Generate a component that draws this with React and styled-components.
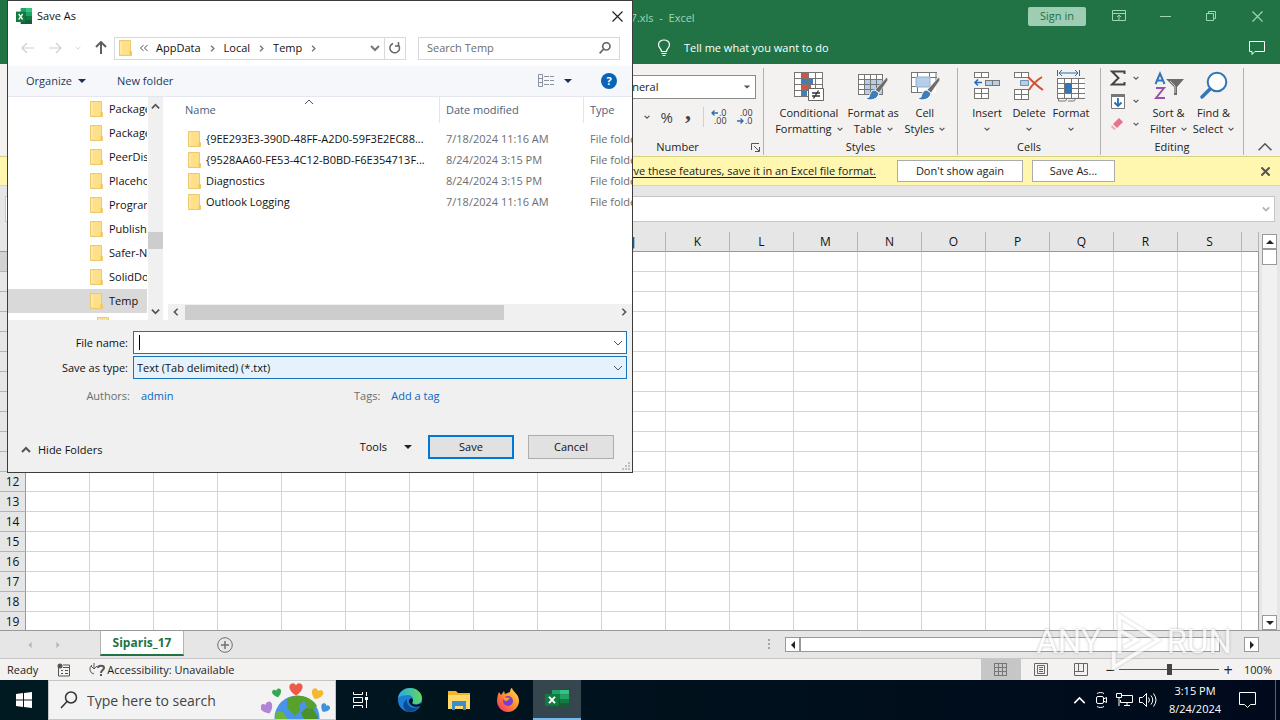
import styled, { createGlobalStyle, css } from "styled-components";

const GlobalStyle = createGlobalStyle`
  * {
    box-sizing: border-box;
  }
  body {
    margin: 0;
    font-family: "Open Sans", "Noto Sans", sans-serif;
    font-size: 11px;
    line-height: 16px;
    color: #222;
  }
  button, input, select {
    font: inherit;
    color: inherit;
    margin: 0;
  }
  button {
    padding: 0;
    border: 0;
    background: none;
  }
  svg {
    display: block;
    flex: none;
  }
`;

const Desktop = styled.div`
  position: relative;
  height: 100vh;
  display: flex;
  flex-direction: column;
  overflow: hidden;
  background: #e6e6e6;
`;

/* ---------- excel window ---------- */

const TitleBar = styled.header`
  display: grid;
  grid-template-columns: 1fr auto 1fr;
  align-items: center;
  height: 32px;
  background: #217346;
  color: #9fd5b7;
`;

const TitleText = styled.div`
  grid-column: 2;
  padding-top: 4px;
  white-space: pre;
`;

const WindowControls = styled.div`
  display: flex;
  justify-content: flex-end;
  align-items: center;
`;

const SignIn = styled.button`
  width: 58px;
  height: 19px;
  margin-right: 10px;
  border-radius: 2px;
  background: #9fcdb3;
  color: #217346;
`;

const WindowButton = styled.button`
  width: 46px;
  height: 30px;
  display: grid;
  place-items: center;
  color: #9fd5b7;
`;

const MenuBar = styled.nav`
  display: flex;
  align-items: center;
  height: 32px;
  padding: 0 14px 0 656px;
  background: #217346;
  color: white;
`;

const TellMe = styled.button`
  display: flex;
  align-items: center;
  gap: 12px;
  margin-right: auto;
`;

const Ribbon = styled.section`
  display: flex;
  justify-content: flex-end;
  height: 92px;
  padding: 4px 0 1px;
  background: #f3f2f1;
`;

const Group = styled.div`
  display: flex;
  flex-direction: column;
  justify-content: space-between;
  width: ${(props) => props.$width}px;
  padding: 0 7px;
  border-right: 1px solid #b1b1b1;
`;

const GroupTools = styled.div`
  display: flex;
  justify-content: center;
  gap: ${(props) => props.$gap || 0}px;
`;

const GroupLabel = styled.div`
  position: relative;
  text-align: center;
`;

const Launcher = styled.button`
  position: absolute;
  right: -4px;
  bottom: 3px;
`;

const BigButton = styled.button`
  display: flex;
  flex-direction: column;
  align-items: center;
  min-width: 42px;
  white-space: nowrap;
  svg.icon {
    margin: 2px 0 3px;
  }
`;

const ButtonLine = styled.span`
  display: flex;
  align-items: center;
  gap: 5px;
  height: 16px;
`;

const SmallTools = styled.div`
  display: flex;
  flex-direction: column;
  gap: 3px;
  margin-right: 6px;
`;

const SmallButton = styled.button`
  display: flex;
  align-items: center;
  gap: 7px;
  height: 20px;
`;

const NumberTools = styled.div`
  display: flex;
  flex-direction: column;
  padding-top: 7px;
`;

const NumberFormat = styled.div`
  display: flex;
  align-items: center;
  height: 24px;
  padding-right: 4px;
  border: 1px solid #8a8a8a;
  background: white;
  select {
    flex: 1;
    padding-left: 18px;
    border: 0;
    background: none;
    appearance: none;
  }
`;

const NumberRow = styled.div`
  display: flex;
  justify-content: flex-end;
  align-items: center;
  gap: 7px;
  height: 36px;
  padding-right: 2px;
  color: #444;
  .percent {
    margin-left: 4px;
    font-size: 15px;
  }
  .comma {
    width: 16px;
    padding-bottom: 12px;
    font: bold 24px/8px "Liberation Serif", serif;
  }
`;

const Rule = styled.span`
  width: 1px;
  height: 20px;
  background: #d0d0d0;
`;

const CollapseArea = styled.div`
  display: flex;
  align-items: flex-end;
  justify-content: center;
  width: 36px;
  padding: 0 0 0 5px;
`;

const MessageBar = styled.div`
  display: flex;
  align-items: center;
  height: 30px;
  padding-right: 10px;
  border-top: 1px solid #d6d083;
  border-bottom: 1px solid #d8d8a8;
  background: #fff6b0;
`;

const MessageText = styled.div`
  width: 876px;
  margin-right: 21px;
  text-align: right;
  text-decoration: underline;
  text-underline-offset: 2px;
`;

const MessageButton = styled.button`
  width: ${(props) => props.$width}px;
  height: 22px;
  margin-right: 9px;
  border: 1px solid #ababab;
  background: white;
`;

const MessageClose = styled.button`
  margin-left: auto;
`;

const FormulaRow = styled.div`
  display: flex;
  gap: 8px;
  height: 46px;
  padding: 10px 5px;
  background: #e6e6e6;
`;

const NameBox = styled.input`
  width: 100px;
  border: 1px solid #c6c6c6;
  background: white;
`;

const FormulaBox = styled.div`
  flex: 1;
  display: flex;
  align-items: center;
  padding-right: 4px;
  border: 1px solid #c6c6c6;
  background: white;
  input {
    flex: 1;
    border: 0;
    outline: 0;
  }
`;

const SheetArea = styled.main`
  flex: 1;
  min-height: 0;
  display: flex;
`;

const SheetClip = styled.div`
  position: relative;
  flex: 1;
  overflow: hidden;
  &::after {
    content: "";
    position: absolute;
    top: 19px;
    right: 0;
    bottom: 0;
    width: 1px;
    background: #999;
  }
`;

const Sheet = styled.table`
  width: 100%;
  table-layout: fixed;
  border-collapse: separate;
  border-spacing: 0;
  font-size: 12px;
  color: #111;
  col.head {
    width: 26px;
  }
  col.cell {
    width: 64px;
  }
  th,
  td {
    height: 20px;
    padding: 0;
    font-weight: normal;
    line-height: 16px;
    border-right: 1px solid #d4d4d4;
    border-bottom: 1px solid #d4d4d4;
  }
  td {
    background: white;
  }
  th {
    background: #e6e6e6;
    border-color: #b4b4b4;
  }
  thead th {
    border-bottom-color: #999;
  }
  tbody th {
    border-right-color: #999;
  }
  tbody tr:first-child th {
    background: #d2d2d2;
  }
`;

const SideScroll = styled.div`
  display: flex;
  flex-direction: column;
  width: 15px;
  margin: 2px 3px 0;
  background: #f1f1f1;
`;

const ScrollButton = styled.button`
  width: 15px;
  height: 15px;
  display: grid;
  place-items: center;
  border: 1px solid #999;
  background: white;
`;

const SideThumb = styled.div`
  height: 16px;
  margin-bottom: auto;
  border: 1px solid #999;
  background: white;
`;

const SheetTabs = styled.div`
  display: flex;
  align-items: center;
  height: 29px;
  padding-right: 21px;
  border-top: 1px solid #999;
  border-bottom: 1px solid #c6c6c6;
  background: #e6e6e6;
`;

const TabArrows = styled.div`
  display: flex;
  justify-content: center;
  gap: 20px;
  width: 100px;
  padding-right: 13px;
`;

const SheetTab = styled.button`
  align-self: flex-start;
  width: 84px;
  height: 25px;
  border: 1px solid #b4b4b4;
  border-width: 0 1px;
  border-bottom: 2px solid #217346;
  background: white;
  font-size: 12px;
  font-weight: 700;
  color: #217346;
`;

const AddSheet = styled.button`
  margin: 0 auto 0 33px;
`;

const BottomScroll = styled.div`
  display: flex;
  width: 474px;
  margin-left: 14px;
`;

const BottomThumb = styled.div`
  flex: 1;
  margin-right: 24px;
  border: 1px solid #999;
  background: white;
`;

const StatusBar = styled.footer`
  display: flex;
  align-items: center;
  height: 21px;
  padding: 0 8px 0 7px;
  background: #f3f2f1;
`;

const StatusIcon = styled.span`
  margin: 0 ${(props) => props.$right}px 0 ${(props) => props.$left}px;
`;

const StatusText = styled.span`
  margin-right: auto;
`;

const ViewButton = styled.button`
  width: 40px;
  height: 21px;
  display: grid;
  place-items: center;
  background: ${(props) => (props.$active ? "#c6c6c6" : "none")};
`;

const ZoomTools = styled.div`
  display: flex;
  align-items: center;
  margin-left: 4px;
`;

const ZoomStep = styled.button`
  width: 10px;
  font-size: 16px;
  line-height: 16px;
`;

const ZoomSlider = styled.input`
  appearance: none;
  width: 100px;
  height: 12px;
  margin: 0 4px;
  background: linear-gradient(#555, #555) center / 100% 1px no-repeat;
  &::-webkit-slider-thumb {
    appearance: none;
    width: 5px;
    height: 11px;
    background: #444;
  }
`;

const ZoomValue = styled.span`
  width: 39px;
  text-align: right;
`;

/* ---------- taskbar ---------- */

const Taskbar = styled.footer`
  display: flex;
  height: 40px;
  background: linear-gradient(90deg, #001a22, #00101c 60%, #000a1c);
  color: white;
`;

const TaskButton = styled.button`
  width: ${(props) => props.$width || 49}px;
  display: grid;
  place-items: center;
  ${(props) =>
    props.$active &&
    css`
      background: #35464e;
      border-bottom: 2px solid #76b9ed;
    `}
`;

const SearchBox = styled.label`
  display: flex;
  align-items: center;
  width: 288px;
  padding-left: 11px;
  border: 1px solid #c6c6c6;
  background: #f3f3f3;
  color: #333;
  input {
    flex: 1;
    min-width: 0;
    margin-left: 9px;
    padding: 2px 0 0;
    border: 0;
    outline: 0;
    background: none;
    font-size: 14px;
  }
  input::placeholder {
    color: #444;
  }
  .globe {
    align-self: flex-end;
    margin-right: 4px;
  }
`;

const Tray = styled.div`
  display: flex;
  align-items: center;
  margin-left: auto;
  padding-right: 14px;
  gap: 6px;
`;

const Clock = styled.div`
  width: 64px;
  text-align: center;
  line-height: 18px;
`;

const ShowDesktop = styled.button`
  width: 5px;
  border-left: 1px solid #56626c;
`;

/* ---------- save dialog ---------- */

const Dialog = styled.section`
  position: absolute;
  top: 0;
  left: 7px;
  width: 626px;
  border: 1px solid #3c3c3c;
  background: #f0f0f0;
  color: #111;
`;

const DialogTitle = styled.div`
  display: flex;
  align-items: center;
  gap: 5px;
  height: 30px;
  padding: 0 9px 0 8px;
  background: white;
  button {
    margin-left: auto;
  }
`;

const NavRow = styled.div`
  display: flex;
  align-items: center;
  height: 35px;
  padding: 0 12px 1px 13px;
  background: white;
`;

const NavButtons = styled.div`
  display: flex;
  align-items: center;
  justify-content: space-between;
  width: 87px;
  margin-right: 6px;
`;

const AddressBar = styled.div`
  display: flex;
  align-items: center;
  gap: 8px;
  width: 292px;
  height: 23px;
  padding-left: 4px;
  border: 1px solid #d9d9d9;
  .drop {
    margin-left: auto;
    margin-right: -4px;
  }
`;

const Refresh = styled.button`
  width: 21px;
  height: 21px;
  display: grid;
  place-items: center;
  border-left: 1px solid #d9d9d9;
`;

const DialogSearch = styled.label`
  display: flex;
  align-items: center;
  flex: 1;
  height: 23px;
  margin-left: 12px;
  padding: 0 8px;
  border: 1px solid #d9d9d9;
  input {
    flex: 1;
    min-width: 0;
    padding: 0;
    border: 0;
    outline: 0;
  }
  input::placeholder {
    color: #6d6d6d;
  }
`;

const Toolbar = styled.div`
  display: flex;
  align-items: center;
  height: 31px;
  padding: 0 15px 0 18px;
  border-bottom: 1px solid #e4e8ee;
  background: #f5f7fa;
  color: #1e395b;
`;

const ToolbarButton = styled.button`
  display: flex;
  align-items: center;
  gap: 5px;
  margin-right: 30px;
`;

const ViewTools = styled.div`
  display: flex;
  align-items: center;
  gap: 8px;
  margin-left: auto;
`;

const HelpButton = styled.button`
  width: 16px;
  height: 16px;
  margin-left: 20px;
  border-radius: 50%;
  background: #0a63b8;
  color: white;
  font-weight: 700;
  line-height: 16px;
`;

const Browser = styled.div`
  display: flex;
  height: 223px;
  background: white;
`;

const Tree = styled.ul`
  width: 139px;
  margin: 0;
  padding: 0;
  list-style: none;
  overflow: hidden;
`;

const TreeItem = styled.li`
  display: flex;
  align-items: center;
  gap: 6px;
  height: 24px;
  padding-left: ${(props) => (props.$deep ? 89 : 82)}px;
  background: ${(props) => (props.$selected ? "#d9d9d9" : "none")};
  white-space: nowrap;
`;

const TreeScroll = styled.div`
  display: flex;
  flex-direction: column;
  align-items: center;
  justify-content: space-between;
  width: 15px;
  margin-left: 1px;
  padding: 5px 0 4px;
  background: #f0f0f0;
  span {
    width: 15px;
    height: 17px;
    margin-top: 62px;
    background: #cdcdcd;
  }
`;

const FilePane = styled.div`
  flex: 1;
  min-width: 0;
  display: flex;
  flex-direction: column;
  justify-content: space-between;
  margin-left: 5px;
  overflow: hidden;
`;

const Files = styled.table`
  width: 100%;
  table-layout: fixed;
  border-spacing: 0;
  white-space: nowrap;
  col.name {
    width: 272px;
  }
  col.date {
    width: 144px;
  }
  th,
  td {
    padding: 0 0 0 6px;
    text-align: left;
    font-weight: normal;
    overflow: hidden;
  }
  th {
    position: relative;
    height: 26px;
    border-right: 1px solid #e5e5e5;
    color: #4c607a;
  }
  th:first-child {
    padding-left: 17px;
  }
  th:last-child {
    border-right: 0;
  }
  td {
    height: 21px;
    color: #6d6d6d;
  }
  td:first-child {
    padding-left: 20px;
    color: #111;
  }
  tbody::before {
    content: "";
    display: block;
    height: 5px;
  }
`;

const SortMark = styled.span`
  position: absolute;
  top: 0;
  left: 136px;
`;

const FileCell = styled.div`
  display: flex;
  align-items: center;
  gap: 5px;
`;

const FileScroll = styled.div`
  display: flex;
  align-items: center;
  justify-content: space-between;
  height: 16px;
  padding: 0 4px;
  background: #f0f0f0;
  span {
    width: 319px;
    height: 15px;
    margin: 0 auto 0 5px;
    background: #cdcdcd;
  }
`;

const Form = styled.div`
  display: grid;
  grid-template-columns: 120px 1fr;
  gap: 2px 5px;
  padding: 11px 5px 9px 0;
  label {
    align-self: center;
    text-align: right;
  }
`;

const Combo = styled.div`
  display: flex;
  align-items: center;
  height: 23px;
  padding-right: 3px;
  border: 1px solid #1a72b8;
  background: ${(props) => (props.$tint ? "#e5f1fb" : "white")};
  input,
  select {
    flex: 1;
    padding: 0 3px;
    border: 0;
    outline: 0;
    appearance: none;
    background: none;
  }
`;

const Caret = styled.span`
  width: 1px;
  height: 15px;
  margin-left: 5px;
  background: black;
`;

const MetaRow = styled.div`
  display: grid;
  grid-template-columns: 122px 202px auto 1fr;
  column-gap: 11px;
  color: #6d6d6d;
  span:first-child {
    text-align: right;
  }
  a {
    color: #0b66c3;
    text-decoration: none;
  }
`;

const Actions = styled.div`
  display: flex;
  align-items: center;
  padding: 31px 18px 13px 13px;
`;

const HideFolders = styled.button`
  display: flex;
  align-items: center;
  gap: 7px;
  margin-right: auto;
  padding-top: 6px;
`;

const Tools = styled.button`
  display: flex;
  align-items: center;
  gap: 16px;
  margin-right: 15px;
`;

const DialogButton = styled.button`
  width: 86px;
  height: 24px;
  margin-left: ${(props) => (props.$primary ? 0 : 14)}px;
  border: ${(props) => (props.$primary ? "2px solid #0078d7" : "1px solid #adadad")};
  background: #e1e1e1;
`;

const Grip = styled.div`
  position: absolute;
  right: 2px;
  bottom: 1px;
`;

/* ---------- watermark ---------- */

const Watermark = styled.div`
  position: absolute;
  right: 48px;
  bottom: 46px;
  display: flex;
  align-items: center;
  gap: 5px;
  opacity: 0.7;
  color: white;
  font: 400 33px/36px Roboto, sans-serif;
  text-shadow: 0 0 3px #999;
  pointer-events: none;
  svg {
    filter: drop-shadow(0 0 1px #aaa);
  }
`;

/* ---------- icons ---------- */

const chevrons = {
  down: "M1 3l4 4 4-4",
  up: "M1 7l4-4 4 4",
  left: "M7 1L3 5l4 4",
  right: "M3 1l4 4-4 4",
};

function Chevron({ dir = "down", size = 10, width = 1.5, color = "#555" }) {
  return (
    <svg width={size} height={size} viewBox="0 0 10 10">
      <path d={chevrons[dir]} fill="none" stroke={color} strokeWidth={width} />
    </svg>
  );
}

const triangles = {
  down: "M1 3h8l-4 4z",
  up: "M1 7h8L5 3z",
  left: "M7 1v8L3 5z",
  right: "M3 1v8l4-4z",
};

function Triangle({ dir = "down", size = 10, color = "#222" }) {
  return (
    <svg width={size} height={size} viewBox="0 0 10 10">
      <path d={triangles[dir]} fill={color} />
    </svg>
  );
}

function Cross({ size = 11, width = 1.2, color = "#222" }) {
  return (
    <svg width={size} height={size} viewBox="0 0 11 11">
      <path d="M0.5 0.5l10 10M10.5 0.5l-10 10" stroke={color} strokeWidth={width} />
    </svg>
  );
}

function Folder() {
  return (
    <svg width="13" height="16" viewBox="0 0 13 16">
      <path d="M0.500 0.500h11v10l1 1v4h-12z" fill="#ffe08a" stroke="#edc96b" />
      <path d="M10.500 15v-4l1.500-1v5z" fill="#f3c65a" />
      <path d="M2 2v12" stroke="#fff0bd" />
    </svg>
  );
}

function ExcelLogo({ width = 16, height = 16 }) {
  return (
    <svg width={width} height={height} viewBox="0 0 24 20" preserveAspectRatio="none">
      <path d="M7 0h8v5H7z" fill="#21a366" />
      <path d="M15 0h9v5h-9z" fill="#33c481" />
      <path d="M7 5h8v5H7z" fill="#107c41" />
      <path d="M15 5h9v5h-9z" fill="#21a366" />
      <path d="M7 10h8v10H7z" fill="#185c37" />
      <path d="M15 10h9v5h-9z" fill="#107c41" />
      <path d="M15 15h9v5h-9z" fill="#185c37" />
      <path d="M0 4.500h14v13H0z" fill="#107c41" />
      <path d="M4 7.500l6 7M10 7.500l-6 7" stroke="white" strokeWidth="2" />
    </svg>
  );
}

function GridLines({ x = 0, y = 0, cols, rows, w, h }) {
  const d = [];
  for (let c = 0; c <= cols; c++) d.push(`M${x + c * w + 0.5} ${y}v${rows * h + 1}`);
  for (let r = 0; r <= rows; r++) d.push(`M${x} ${y + r * h + 0.5}h${cols * w + 1}`);
  return <path d={d.join("")} fill="none" stroke="#767676" />;
}

function ConditionalIcon() {
  return (
    <svg className="icon" width="30" height="32" viewBox="0 0 30 32">
      <path d="M0 2h28v24H0z" fill="white" />
      <path d="M8 2h6v6H8zM8 14h9v6H8z" fill="#d35345" />
      <path d="M8 8h11v6H8zM8 20h5v6H8z" fill="#3f7fb9" />
      <GridLines y={2} cols={4} rows={4} w={7} h={6} />
      <path d="M14.500 18.500h15v12h-15z" fill="white" stroke="#666" />
      <path d="M18 23h8M18 26h8M24.500 20.500l-5 8" stroke="#333" strokeWidth="1.3" />
    </svg>
  );
}

function Brush() {
  return (
    <>
      <path d="M29 7L17 20l4 3 9-13z" fill="#6d6d6d" stroke="#f3f2f1" strokeWidth="0.700" />
      <path d="M17 20c-4 0-5 4-6 7l-4 2c5 2 13 1 14-6z" fill="#3f7fb9" stroke="white" />
    </>
  );
}

function TableIcon() {
  return (
    <svg className="icon" width="30" height="32" viewBox="0 0 30 32">
      <path d="M0 4h25v20H0z" fill="white" />
      <path d="M7 9h18v15H7z" fill="#b7cfe6" />
      <GridLines y={4} cols={4} rows={4} w={6} h={5} />
      <Brush />
    </svg>
  );
}

function CellIcon() {
  return (
    <svg className="icon" width="30" height="32" viewBox="0 0 30 32">
      <path d="M1 2h25v21H1z" fill="white" />
      <path d="M1.500 2v21M7.500 2v21M19.500 2v5M26 2v10M1 2.500h26M1 7.500h26M1 16.500h7M1 22.500h14" stroke="#767676" fill="none" />
      <path d="M6 7h14v10H6z" fill="#b7cfe6" stroke="#8fb0d0" />
      <Brush />
    </svg>
  );
}

function InsertIcon() {
  return (
    <svg className="icon" width="28" height="32" viewBox="0 0 28 32">
      <path d="M1 2h14v5H1zM1 18h14v11H1z" fill="white" />
      <GridLines x={1} y={2} cols={2} rows={1} w={7} h={5} />
      <GridLines x={1} y={18} cols={2} rows={2} w={7} h={5} />
      <path d="M12 10h14v5H12z" fill="#b7cfe6" />
      <GridLines x={12} y={10} cols={2} rows={1} w={7} h={5} />
      <path d="M9 12.500H2M5 9.500l-3 3 3 3" fill="none" stroke="#2b6cb0" strokeWidth="1.6" />
    </svg>
  );
}

function DeleteIcon() {
  return (
    <svg className="icon" width="30" height="32" viewBox="0 0 30 32">
      <path d="M0 2h14v5H0zM0 19h14v10H0z" fill="white" />
      <GridLines y={2} cols={2} rows={1} w={7} h={5} />
      <GridLines y={19} cols={2} rows={2} w={7} h={5} />
      <path d="M6.500 10.500h8v5h-8z" fill="#b7cfe6" stroke="#6f8fae" />
      <path d="M14 7c4 4 9 9 15 13M28 7c-5 3-10 8-13 13" stroke="#d4502f" strokeWidth="2" fill="none" />
    </svg>
  );
}

function FormatIcon() {
  return (
    <svg className="icon" width="28" height="32" viewBox="0 0 28 32">
      <path d="M0.500 0v6M22.500 0v6M2 3h19M5 0L2 3l3 3M18 0l3 3-3 3" fill="none" stroke="#2b6cb0" />
      <path d="M0 8h27v19H0z" fill="white" />
      <GridLines y={8} cols={4} rows={4} w={7} h={5} />
      <path d="M8 13h7v10H8z" fill="#3474b7" />
      <path d="M1.500 28v3h7l2-3M11 31h6l2-3" fill="none" stroke="#767676" />
    </svg>
  );
}

function SortIcon() {
  return (
    <svg className="icon" width="30" height="32" viewBox="0 0 30 32">
      <path d="M1.500 14L6 3.500 10.500 14M3 10.500h6" fill="none" stroke="#2f78b8" strokeWidth="2" />
      <path d="M2 18h8L2 28h9" fill="none" stroke="#9b4fae" strokeWidth="2" />
      <path d="M12 9h18l-7 8v8h-3v-8z" fill="#6b6b6b" />
      <path d="M16 11l5 5v7" fill="none" stroke="#d0d0d0" />
    </svg>
  );
}

function FindIcon() {
  return (
    <svg className="icon" width="30" height="32" viewBox="0 0 30 32">
      <circle cx="18" cy="12" r="9.300" fill="white" stroke="#3474b7" strokeWidth="2" />
      <path d="M11 19l-8 8" stroke="#3474b7" strokeWidth="3.500" strokeLinecap="round" />
    </svg>
  );
}

function DecimalIcon({ more }) {
  return (
    <svg width="18" height="18" viewBox="0 0 18 18" fontFamily="Open Sans" fontSize="9" fill="#333">
      <text x={more ? 8 : 4} y="8">{more ? ".0" : ".00"}</text>
      <text x={more ? 3 : 9} y="16">{more ? ".00" : ".0"}</text>
      {more ? (
        <path d="M7 5H1M3.500 2.500L1 5l2.500 2.500" fill="none" stroke="#2b6cb0" strokeWidth="1.300" />
      ) : (
        <path d="M1 13h6M4.500 10.500L7 13l-2.500 2.500" fill="none" stroke="#2b6cb0" strokeWidth="1.300" />
      )}
    </svg>
  );
}

function Magnifier({ size, color = "#333", width = 1.5 }) {
  return (
    <svg width={size} height={size} viewBox="0 0 18 18">
      <circle cx="11" cy="6.500" r="5.500" fill="none" stroke={color} strokeWidth={width} />
      <path d="M7 10.500L1 17" stroke={color} strokeWidth={width} />
    </svg>
  );
}

function Arrow({ dir, color }) {
  const d = {
    left: "M13 7H1M6 2L1 7l5 5",
    right: "M1 7h12M8 2l5 5-5 5",
    up: "M7 13V1M2 6l5-5 5 5",
  };
  return (
    <svg width="14" height="14" viewBox="0 0 14 14">
      <path d={d[dir]} fill="none" stroke={color} strokeWidth={dir === "up" ? 2 : 1.2} />
    </svg>
  );
}

const HEART = "M0 4C-5 1-5-3-2.500-3.500-1-4 0-2.500 0-2 0-2.500 1-4 2.500-3.500 5-3 5 1 0 4z";

function Globe() {
  return (
    <svg className="globe" width="70" height="38" viewBox="0 0 70 38">
      <circle cx="36" cy="37" r="22.500" fill="#4a94e8" />
      <path d="M26 18c6-4 13-4 19-2 5 2 9 5 11 9l-4 4-6-3-3-6-5 4 1 6-5 5-4-4-4-5z" fill="#5aa02c" />
      <path d="M45 27l7 1 5 8v2H43l-3-6z" fill="#4c9128" />
      <path d="M16 30l6 1 4 6v1H14z" fill="#6fb43a" />
      <path d={HEART} transform="translate(35 8) scale(1.6)" fill="#ee5a4a" />
      <path d={HEART} transform="translate(16 12) rotate(-15) scale(1.100)" fill="#34a853" />
      <path d={HEART} transform="translate(56 13) rotate(20) scale(1.400)" fill="#f5b92e" />
      <path d={HEART} transform="translate(6 27) rotate(-25) scale(1.500)" fill="#b184d8" />
      <path d={HEART} transform="translate(64 27) rotate(30) scale(1.100)" fill="#3d92dc" />
    </svg>
  );
}

function Edge() {
  return (
    <svg width="26" height="26" viewBox="0 0 26 26">
      <defs>
        <linearGradient id="edgeTop" x1="0" x2="1">
          <stop offset="0" stopColor="#2aa8e8" />
          <stop offset="1" stopColor="#62d85c" />
        </linearGradient>
      </defs>
      <circle cx="13" cy="13" r="12" fill="#1a7fd4" />
      <path d="M1 11C2 4 8 1 13 1c7 0 12 5 12 10 0 4-3 6-6 6-3 0-4-1-4-2 2-2 1-7-4-7-4 0-8 1-10 3z" fill="url(#edgeTop)" />
      <path d="M10 12c-1 6 4 11 12 8-3 4-8 5-11 5-5-2-7-9-1-13z" fill="#0c4a94" />
      <path d="M14 11c3 1 2 4 1 5 1 2 5 2 7 1l3-1-1 3c-5 2-12 0-12-5 0-1 1-2 2-3z" fill="#00141e" />
    </svg>
  );
}

function Explorer() {
  return (
    <svg width="24" height="22" viewBox="0 0 24 22">
      <path d="M1 2h8l2 2h12v15H1z" fill="#f0b429" />
      <path d="M1 6h22v14H1z" fill="#ffd869" />
      <path d="M5 12h14v9h-3v-4H8v4H5z" fill="#3c8ec9" />
    </svg>
  );
}

function Firefox() {
  return (
    <svg width="24" height="26" viewBox="0 0 24 26">
      <defs>
        <linearGradient id="fox" x1="1" y1="0" x2="0" y2="1">
          <stop offset="0" stopColor="#ffe14a" />
          <stop offset="0.500" stopColor="#ff8a2a" />
          <stop offset="1" stopColor="#f5267a" />
        </linearGradient>
      </defs>
      <path d="M3 5l2 3 3-4 1 3 5-2c0-2 1-4 2-4 1 4 7 6 7 13 0 6-5 11-11 11S1 20 1 14c0-4 1-7 2-9z" fill="url(#fox)" />
      <circle cx="12" cy="14" r="5" fill="#7a3fd0" />
      <path d="M7 10c3 0 4 1 7 1l-3 3c-3 0-4-2-4-4z" fill="#ff9a2c" />
    </svg>
  );
}

/* ---------- data ---------- */

const columns = "ABCDEFGHIJKLMNOPQRS".split("");
const rows = Array.from({ length: 19 }, (_, i) => i + 1);

const folders = [
  "Packages",
  "Package Cache",
  "PeerDistRepub",
  "PlaceholderTile",
  "Programs",
  "Publishers",
  "Safer-Networking",
  "SolidDocuments",
  "Temp",
];

const files = [
  { name: "{9EE293E3-390D-48FF-A2D0-59F3E2EC88...", date: "7/18/2024 11:16 AM" },
  { name: "{9528AA60-FE53-4C12-B0BD-F6E354713F...", date: "8/24/2024 3:15 PM" },
  { name: "Diagnostics", date: "8/24/2024 3:15 PM" },
  { name: "Outlook Logging", date: "7/18/2024 11:16 AM" },
];

/* ---------- parts ---------- */

function RibbonButton({ icon, top, bottom }) {
  return (
    <BigButton>
      {icon}
      <ButtonLine>{top}</ButtonLine>
      <ButtonLine>
        {bottom}
        <Chevron size={6} width={2} />
      </ButtonLine>
    </BigButton>
  );
}

function ExcelRibbon() {
  return (
    <Ribbon>
      <Group $width={172}>
        <NumberTools>
          <NumberFormat>
            <select aria-label="Number format">
              <option>General</option>
            </select>
            <Triangle size={8} color="#555" />
          </NumberFormat>
          <NumberRow>
            <Chevron size={6} width={2} />
            <button className="percent">%</button>
            <button className="comma">,</button>
            <Rule />
            <button aria-label="Increase decimal"><DecimalIcon more /></button>
            <button aria-label="Decrease decimal"><DecimalIcon /></button>
          </NumberRow>
        </NumberTools>
        <GroupLabel>
          Number
          <Launcher aria-label="Number settings">
            <svg width="9" height="9" viewBox="0 0 9 9">
              <path d="M0.500 7V0.500H8M3 3l5 5M8.500 4v4.500H4" fill="none" stroke="#555" />
            </svg>
          </Launcher>
        </GroupLabel>
      </Group>
      <Group $width={194}>
        <GroupTools $gap={5}>
          <RibbonButton icon={<ConditionalIcon />} top="Conditional" bottom="Formatting" />
          <RibbonButton icon={<TableIcon />} top="Format as" bottom="Table" />
          <RibbonButton icon={<CellIcon />} top="Cell" bottom="Styles" />
        </GroupTools>
        <GroupLabel>Styles</GroupLabel>
      </Group>
      <Group $width={143}>
        <GroupTools>
          <RibbonButton icon={<InsertIcon />} top="Insert" />
          <RibbonButton icon={<DeleteIcon />} top="Delete" />
          <RibbonButton icon={<FormatIcon />} top="Format" />
        </GroupTools>
        <GroupLabel>Cells</GroupLabel>
      </Group>
      <Group $width={143}>
        <GroupTools $gap={3}>
          <SmallTools>
            <SmallButton aria-label="AutoSum">
              <svg width="16" height="16" viewBox="0 0 16 16">
                <path d="M14.500 4V1.500H2L8.500 8 2 14.500h12.500V12" fill="none" stroke="#444" strokeWidth="2" />
              </svg>
              <Chevron size={6} width={2} />
            </SmallButton>
            <SmallButton aria-label="Fill">
              <svg width="16" height="16" viewBox="0 0 16 16">
                <path d="M1.500 1.500h13v14h-13z" fill="white" stroke="#777" />
                <path d="M1 1h14v3H1z" fill="#777" />
                <path d="M8 5v8M4.500 9.500L8 13l3.500-3.500" fill="none" stroke="#2b6cb0" strokeWidth="1.800" />
              </svg>
              <Chevron size={6} width={2} />
            </SmallButton>
            <SmallButton aria-label="Clear">
              <svg width="16" height="16" viewBox="0 0 16 16">
                <path d="M9 2l4 4-6 6-4-4z" fill="#e8728c" />
                <path d="M2 9l4 4-2 1-3-3z" fill="#f2a9b8" />
              </svg>
              <Chevron size={6} width={2} />
            </SmallButton>
          </SmallTools>
          <RibbonButton icon={<SortIcon />} top="Sort &" bottom="Filter" />
          <RibbonButton icon={<FindIcon />} top="Find &" bottom="Select" />
        </GroupTools>
        <GroupLabel>Editing</GroupLabel>
      </Group>
      <CollapseArea>
        <button aria-label="Collapse ribbon"><Chevron dir="up" size={16} width={1} /></button>
      </CollapseArea>
    </Ribbon>
  );
}

function Spreadsheet() {
  return (
    <SheetArea>
      <SheetClip>
        <Sheet>
          <colgroup>
            <col className="head" />
            {columns.map((c) => (
              <col className="cell" key={c} />
            ))}
            <col />
          </colgroup>
          <thead>
            <tr>
              <th />
              {columns.map((c) => (
                <th key={c}>{c}</th>
              ))}
              <th />
            </tr>
          </thead>
          <tbody>
            {rows.map((r) => (
              <tr key={r}>
                <th>{r}</th>
                {columns.map((c) => (
                  <td key={c} />
                ))}
                <td />
              </tr>
            ))}
          </tbody>
        </Sheet>
      </SheetClip>
      <SideScroll>
        <ScrollButton aria-label="Scroll up"><Triangle dir="up" /></ScrollButton>
        <SideThumb />
        <ScrollButton aria-label="Scroll down"><Triangle /></ScrollButton>
      </SideScroll>
    </SheetArea>
  );
}

function SaveDialog() {
  return (
    <Dialog role="dialog" aria-label="Save As">
      <DialogTitle>
        <ExcelLogo />
        Save As
        <button aria-label="Close"><Cross /></button>
      </DialogTitle>
      <NavRow>
        <NavButtons>
          <Arrow dir="left" color="#d0d0d0" />
          <Arrow dir="right" color="#d0d0d0" />
          <Chevron size={6} color="#d0d0d0" />
          <Arrow dir="up" color="#5f5f5f" />
        </NavButtons>
        <AddressBar>
          <Folder />
          <svg width="8" height="8" viewBox="0 0 8 8">
            <path d="M3.500 1l-3 3 3 3M7.500 1l-3 3 3 3" fill="none" stroke="#555" />
          </svg>
          <button>AppData</button>
          <Chevron dir="right" size={7} width={2} color="#777" />
          <button>Local</button>
          <Chevron dir="right" size={7} width={2} color="#777" />
          <button>Temp</button>
          <Chevron dir="right" size={7} width={2} color="#777" />
          <button className="drop" aria-label="Previous locations"><Chevron width={2} color="#777" /></button>
          <Refresh aria-label="Refresh">
            <svg width="12" height="12" viewBox="0 0 12 12">
              <path d="M4 1.500A4.800 4.800 0 1 0 9 2.500M9.500 0v4H6" fill="none" stroke="#666" strokeWidth="1.500" />
            </svg>
          </Refresh>
        </AddressBar>
        <DialogSearch>
          <input placeholder="Search Temp" aria-label="Search Temp" />
          <Magnifier size={12} color="#666" width={2.5} />
        </DialogSearch>
      </NavRow>
      <Toolbar>
        <ToolbarButton>
          Organize
          <Triangle color="#1e2f4b" />
        </ToolbarButton>
        <ToolbarButton>New folder</ToolbarButton>
        <ViewTools>
          <svg width="17" height="14" viewBox="0 0 17 14">
            <path d="M0.500 0.500h4v12h-4zM0 4.500h5M0 8.500h5" fill="none" stroke="#8b939e" />
            <path d="M6 2.500h5M12 2.500h4M6 6.500h5M12 6.500h4M6 10.500h5M12 10.500h4" stroke="#8b939e" />
          </svg>
          <Triangle color="#1e2f4b" />
          <HelpButton aria-label="Help">?</HelpButton>
        </ViewTools>
      </Toolbar>
      <Browser>
        <Tree>
          {folders.map((name) => (
            <TreeItem key={name} $selected={name === "Temp"}>
              <Folder />
              {name}
            </TreeItem>
          ))}
          <TreeItem $deep>
            <Folder />
          </TreeItem>
        </Tree>
        <TreeScroll>
          <Chevron dir="up" size={9} width={2} />
          <span />
          <Chevron size={9} width={2} />
        </TreeScroll>
        <FilePane>
          <Files>
            <colgroup>
              <col className="name" />
              <col className="date" />
              <col />
            </colgroup>
            <thead>
              <tr>
                <th>
                  Name
                  <SortMark><Chevron dir="up" width={1} /></SortMark>
                </th>
                <th>Date modified</th>
                <th>Type</th>
              </tr>
            </thead>
            <tbody>
              {files.map((file) => (
                <tr key={file.name}>
                  <td>
                    <FileCell>
                      <Folder />
                      {file.name}
                    </FileCell>
                  </td>
                  <td>{file.date}</td>
                  <td>File folder</td>
                </tr>
              ))}
            </tbody>
          </Files>
          <FileScroll>
            <Chevron dir="left" size={8} width={2} />
            <span />
            <Chevron dir="right" size={8} width={2} />
          </FileScroll>
        </FilePane>
      </Browser>
      <Form>
        <label htmlFor="file-name">File name:</label>
        <Combo>
          <Caret />
          <input id="file-name" />
          <Chevron width={1} />
        </Combo>
        <label htmlFor="file-type">Save as type:</label>
        <Combo $tint>
          <select id="file-type">
            <option>Text (Tab delimited) (*.txt)</option>
          </select>
          <Chevron width={1} />
        </Combo>
      </Form>
      <MetaRow>
        <span>Authors:</span>
        <a href="#authors">admin</a>
        <span>Tags:</span>
        <a href="#tags">Add a tag</a>
      </MetaRow>
      <Actions>
        <HideFolders>
          <Chevron dir="up" width={2} />
          Hide Folders
        </HideFolders>
        <Tools>
          Tools
          <Triangle />
        </Tools>
        <DialogButton $primary>Save</DialogButton>
        <DialogButton>Cancel</DialogButton>
      </Actions>
      <Grip>
        <svg width="9" height="9" viewBox="0 0 9 9">
          <path d="M7 0h2v2H7zM7 3h2v2H7zM7 6h2v2H7zM4 3h2v2H4zM4 6h2v2H4zM1 6h2v2H1z" fill="#bfbfbf" />
        </svg>
      </Grip>
    </Dialog>
  );
}

function WindowsTaskbar() {
  return (
    <Taskbar>
      <TaskButton $width={48} aria-label="Start">
        <svg width="16" height="16" viewBox="0 0 16 16">
          <path d="M0 2l7-1v6.500H0zM8 1l8-1v7.500H8zM0 8.500h7V15l-7-1zM8 8.500h8V16l-8-1z" fill="white" />
        </svg>
      </TaskButton>
      <SearchBox>
        <Magnifier size={18} />
        <input placeholder="Type here to search" aria-label="Search" />
        <Globe />
      </SearchBox>
      <TaskButton aria-label="Task view">
        <svg width="17" height="16" viewBox="0 0 17 16">
          <path d="M1.500 0v2.500h9V0M1.500 5.500h9v5h-9zM1.500 16v-2.500h9V16M14.500 0v4M14.500 8v8" fill="none" stroke="white" />
          <path d="M13 5h3v3h-3z" fill="white" />
        </svg>
      </TaskButton>
      <TaskButton aria-label="Edge"><Edge /></TaskButton>
      <TaskButton aria-label="File Explorer"><Explorer /></TaskButton>
      <TaskButton $width={50} aria-label="Firefox"><Firefox /></TaskButton>
      <TaskButton $width={48} $active aria-label="Excel"><ExcelLogo width={24} height={18} /></TaskButton>
      <Tray>
        <Chevron dir="up" size={13} width={1.2} color="white" />
        <svg width="18" height="18" viewBox="0 0 18 18" fill="none" stroke="white">
          <rect x="4.500" y="5.500" width="7" height="7" rx="1.500" />
          <path d="M11.500 8l3-1.500v5l-3-1.500M5 2.500c2-1.300 5-1.300 7 0M5 15.500c2 1.300 5 1.300 7 0" />
        </svg>
        <svg width="17" height="16" viewBox="0 0 17 16" fill="none" stroke="white">
          <path d="M6 3.500h10.500v7H4.500V8M8 13.500h6M11 11v3M0.500 1.500h5v4h-5zM3 6v8" />
        </svg>
        <svg width="18" height="16" viewBox="0 0 18 16" fill="none" stroke="white">
          <path d="M0.500 5.500h3l4-4v13l-4-4h-3zM9.500 5.500q2 2.500 0 5M12 3.500q3.500 4.500 0 9M14.500 1.500q5 6.500 0 13" />
        </svg>
        <Clock>
          3:15 PM
          <br />
          8/24/2024
        </Clock>
        <TaskButton $width={28} aria-label="Notifications">
          <svg width="17" height="17" viewBox="0 0 17 17">
            <path d="M0.500 0.500h16v12h-5l-3 3-3-3h-5z" fill="none" stroke="white" />
          </svg>
        </TaskButton>
      </Tray>
      <ShowDesktop aria-label="Show desktop" />
    </Taskbar>
  );
}

export default function App() {
  return (
    <Desktop>
      <GlobalStyle />
      <TitleBar>
        <TitleText>Siparis_17.xls  -  Excel</TitleText>
        <WindowControls>
          <SignIn>Sign in</SignIn>
          <WindowButton aria-label="Ribbon display options">
            <svg width="14" height="12" viewBox="0 0 14 12" fill="none" stroke="currentColor">
              <path d="M0.500 0.500h13v10H0.500zM0 3.500h14M7 10V5M5 7l2-2 2 2" />
            </svg>
          </WindowButton>
          <WindowButton aria-label="Minimize">
            <svg width="11" height="1" viewBox="0 0 11 1"><path d="M0 0h11v1H0z" fill="currentColor" /></svg>
          </WindowButton>
          <WindowButton aria-label="Restore">
            <svg width="10" height="10" viewBox="0 0 10 10" fill="none" stroke="currentColor">
              <path d="M0.500 2.500h7v7h-7zM2.500 2V0.500h7v7H8" />
            </svg>
          </WindowButton>
          <WindowButton aria-label="Close"><Cross color="currentColor" /></WindowButton>
        </WindowControls>
      </TitleBar>
      <MenuBar>
        <TellMe>
          <svg width="16" height="18" viewBox="0 0 16 18" fill="none" stroke="white" strokeWidth="1.200">
            <path d="M5.500 12.500c0-3-3-3.500-3-7C2.500 3 5 1 8 1s5.500 2 5.500 4.500c0 3.500-3 4-3 7zM5.500 14.500h5M6.500 16.500h3" />
          </svg>
          Tell me what you want to do
        </TellMe>
        <button aria-label="Comments">
          <svg width="18" height="16" viewBox="0 0 18 16">
            <path d="M1.500 1.500h15v10H7l-3 3v-3H1.500z" fill="none" stroke="white" />
          </svg>
        </button>
      </MenuBar>
      <ExcelRibbon />
      <MessageBar>
        <MessageText>To preserve these features, save it in an Excel file format.</MessageText>
        <MessageButton $width={126}>Don't show again</MessageButton>
        <MessageButton $width={83}>Save As...</MessageButton>
        <MessageClose aria-label="Dismiss"><Cross size={9} width={2.5} color="#555" /></MessageClose>
      </MessageBar>
      <FormulaRow>
        <NameBox aria-label="Name box" />
        <FormulaBox>
          <input aria-label="Formula" />
          <Chevron size={8} width={2} color="#b0b0b0" />
        </FormulaBox>
      </FormulaRow>
      <Spreadsheet />
      <SheetTabs>
        <TabArrows>
          <Triangle dir="left" size={8} color="#b8b8b8" />
          <Triangle dir="right" size={8} color="#b8b8b8" />
        </TabArrows>
        <SheetTab>Siparis_17</SheetTab>
        <AddSheet aria-label="New sheet">
          <svg width="16" height="16" viewBox="0 0 16 16" fill="none" stroke="#707070">
            <circle cx="8" cy="8" r="7.300" />
            <path d="M8 4v8M4 8h8" strokeWidth="1.500" />
          </svg>
        </AddSheet>
        <svg width="3" height="11" viewBox="0 0 3 11">
          <path d="M0 0h2v2H0zM0 4h2v2H0zM0 8h2v2H0z" fill="#a5a5a5" />
        </svg>
        <BottomScroll>
          <ScrollButton aria-label="Scroll left"><Triangle dir="left" /></ScrollButton>
          <BottomThumb />
          <ScrollButton aria-label="Scroll right"><Triangle dir="right" /></ScrollButton>
        </BottomScroll>
      </SheetTabs>
      <StatusBar>
        Ready
        <StatusIcon $left={19} $right={17}>
          <svg width="14" height="14" viewBox="0 0 14 14">
            <path d="M1.500 5v8h11V2H6M4 7.500h2M8 7.500h3M4 10.500h2M8 10.500h3M6 4.500h6" fill="none" stroke="#555" />
            <circle cx="3" cy="3" r="2.500" fill="#555" />
          </svg>
        </StatusIcon>
        <StatusIcon $left={0} $right={2}>
          <svg width="17" height="15" viewBox="0 0 17 15" fill="none" stroke="#555">
            <path d="M4 3a5 5 0 0 0 2 9M6 1v5M3 4l3 3 3-3" />
            <path d="M10 6c0-3 6-3 6 0 0 2-3 2-3 5M13 12v2" strokeWidth="2" />
          </svg>
        </StatusIcon>
        <StatusText>Accessibility: Unavailable</StatusText>
        <ViewButton $active aria-label="Normal view">
          <svg width="14" height="13" viewBox="0 0 14 13"><GridLines cols={3} rows={3} w={4} h={4} /></svg>
        </ViewButton>
        <ViewButton aria-label="Page layout">
          <svg width="14" height="13" viewBox="0 0 14 13" fill="none" stroke="#666">
            <path d="M0.500 0.500h13v12H0.500zM3.500 2.500h7v8h-7zM5 4.500h4M5 6.500h4M5 8.500h4" />
          </svg>
        </ViewButton>
        <ViewButton aria-label="Page break preview">
          <svg width="14" height="13" viewBox="0 0 14 13" fill="none" stroke="#666">
            <path d="M0.500 0.500h13v12H0.500zM4.500 0v8.500M9.500 0v8.500M0 8.500h10" />
          </svg>
        </ViewButton>
        <ZoomTools>
          <ZoomStep aria-label="Zoom out">−</ZoomStep>
          <ZoomSlider type="range" aria-label="Zoom" defaultValue="50" />
          <ZoomStep aria-label="Zoom in">+</ZoomStep>
          <ZoomValue>100%</ZoomValue>
        </ZoomTools>
      </StatusBar>
      <WindowsTaskbar />
      <SaveDialog />
      <Watermark>
        ANY
        <svg width="56" height="64" viewBox="0 0 58 64" fill="none" stroke="white" strokeWidth="4">
          <path d="M14 30V5l40 25L8 58V42M14 44V20l18 10-14 8" />
        </svg>
        RUN
      </Watermark>
    </Desktop>
  );
}
